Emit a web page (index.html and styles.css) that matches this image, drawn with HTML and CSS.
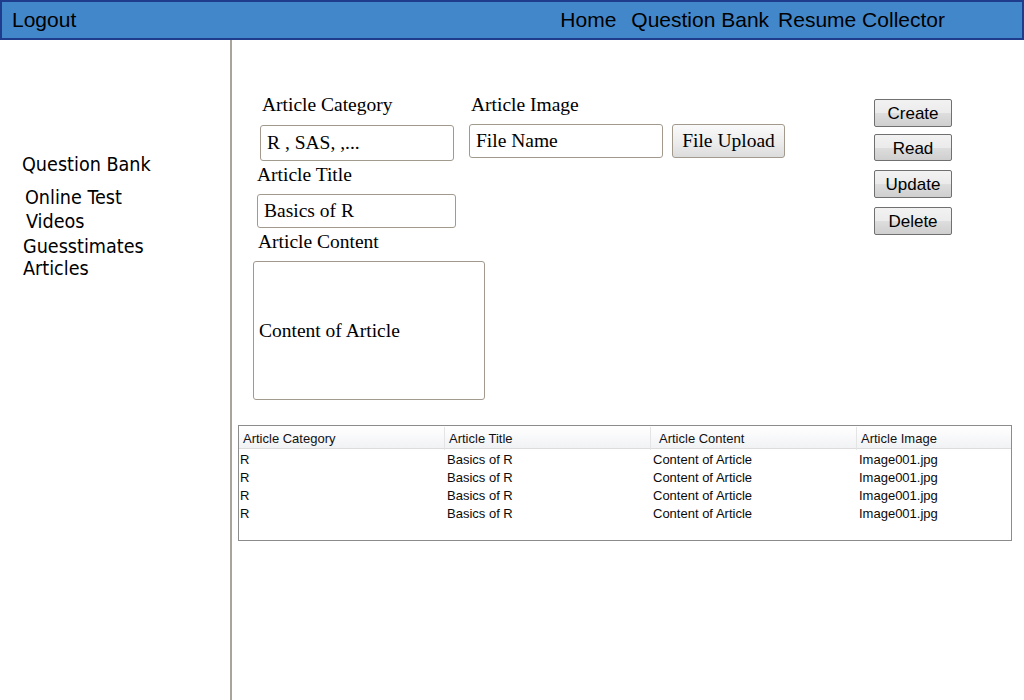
FILE: index.html
```html
<!DOCTYPE html>
<html>
<head>
<meta charset="utf-8">
<link rel="stylesheet" href="styles.css">
</head>
<body>
<header class="topbar">
  <span class="logout">Logout</span>
  <nav class="topnav">
    <span class="topnav-home">Home</span>
    <span class="topnav-qb">Question Bank</span>
    <span class="topnav-rc">Resume Collector</span>
  </nav>
</header>
<div class="layout">
  <aside class="sidebar">
    <div class="side-item side-qb">Question Bank</div>
    <div class="side-item side-ot">Online Test</div>
    <div class="side-item side-vid">Videos</div>
    <div class="side-item side-gue">Guesstimates</div>
    <div class="side-item side-art">Articles</div>
  </aside>
  <main class="main">
    <section class="form">
      <div class="col-a">
        <label class="lbl lbl-cat">Article Category</label>
        <div class="field field-cat">R , SAS, ,...</div>
        <label class="lbl lbl-title">Article Title</label>
        <div class="field field-title">Basics of R</div>
        <label class="lbl lbl-content">Article Content</label>
        <div class="field field-content">Content of Article</div>
      </div>
      <div class="col-b">
        <label class="lbl lbl-img">Article Image</label>
        <div class="img-row">
          <div class="field field-img">File Name</div>
          <button class="upload-btn">File Upload</button>
        </div>
      </div>
      <div class="col-c">
        <button class="crud-btn crud-create">Create</button>
        <button class="crud-btn crud-read">Read</button>
        <button class="crud-btn crud-update">Update</button>
        <button class="crud-btn crud-delete">Delete</button>
      </div>
    </section>
    <section class="grid">
      <div class="grid-head">
        <div class="gh gh-1">Article Category</div>
        <div class="gh gh-2">Article Title</div>
        <div class="gh gh-3">Article Content</div>
        <div class="gh gh-4">Article Image</div>
      </div>
      <div class="grid-body">
        <div class="grow"><span class="c1">R</span><span class="c2">Basics of R</span><span class="c3">Content of Article</span><span class="c4">Image001.jpg</span></div>
        <div class="grow"><span class="c1">R</span><span class="c2">Basics of R</span><span class="c3">Content of Article</span><span class="c4">Image001.jpg</span></div>
        <div class="grow"><span class="c1">R</span><span class="c2">Basics of R</span><span class="c3">Content of Article</span><span class="c4">Image001.jpg</span></div>
        <div class="grow"><span class="c1">R</span><span class="c2">Basics of R</span><span class="c3">Content of Article</span><span class="c4">Image001.jpg</span></div>
      </div>
    </section>
  </main>
</div>
</body>
</html>
```
FILE: styles.css
```css
* { box-sizing: border-box; }
html, body { margin: 0; padding: 0; background: #fff; }
body { width: 1024px; height: 700px; overflow: hidden; font-family: "Liberation Sans", Arial, sans-serif; color: #000; }

.topbar {
  height: 40px;
  background: #4387cb;
  border: 2px solid #1f3c8c;
  display: flex;
  align-items: center;
  font-size: 21px;
  padding: 0 77px 0 10px;
}
.topnav { margin-left: auto; display: flex; }
.topnav-home { margin-right: 15px; }
.topnav-qb { margin-right: 9px; }

.layout { display: flex; height: 660px; }
.sidebar {
  width: 232px;
  flex: none;
  border-right: 2px solid #a8a49c;
  padding-top: 113px;
  font-family: "DejaVu Sans Condensed", "DejaVu Sans", sans-serif;
  font-stretch: condensed;
  font-size: 19.6px;
  display: flex;
  flex-direction: column;
}
.side-item { line-height: 24px; }
.side-qb { margin-left: 22px; }
.side-ot { margin-left: 25px; margin-top: 9px; }
.side-vid { margin-left: 26px; }
.side-gue { margin-left: 23px; margin-top: 1px; }
.side-art { margin-left: 23px; margin-top: -2px; }

.main { flex: 1; padding: 54px 12px 0 6px; }
.form { display: flex; }
.lbl {
  display: block;
  font-family: "Liberation Serif", "Times New Roman", serif;
  font-size: 19.5px;
  line-height: 22px;
  height: 22px;
}
.field {
  font-family: "Liberation Serif", "Times New Roman", serif;
  font-size: 19.5px;
  color: #000;
  border: 1px solid #a39a8e;
  border-radius: 3px;
  background: #fff;
  display: flex;
  align-items: center;
  padding-left: 6px;
  white-space: nowrap;
}
.col-a { width: 216px; margin-left: 15px; flex: none; display: flex; flex-direction: column; }
.lbl-cat { margin-left: 9px; }
.field-cat { margin-left: 7px; margin-top: 9px; width: 194px; height: 36px; }
.lbl-title { margin-left: 4px; margin-top: 3px; }
.field-title { margin-left: 4px; margin-top: 8px; width: 199px; height: 34px; }
.lbl-content { margin-left: 5px; margin-top: 3px; }
.field-content { margin-top: 8px; width: 232px; height: 139px; padding-left: 5px; }

.col-b { width: 405px; flex: none; }
.lbl-img { margin-left: 2px; }
.img-row { display: flex; margin-top: 8px; }
.field-img { width: 194px; height: 34px; }
.upload-btn {
  margin-left: 9px;
  width: 113px;
  height: 34px;
  font-family: "Liberation Serif", "Times New Roman", serif;
  font-size: 19.5px;
  color: #000;
  border: 1px solid #a39a8e;
  border-radius: 3px;
  background: linear-gradient(#fafafa, #ececec 55%, #dcdcdc);
  padding: 0;
}

.col-c { display: flex; flex-direction: column; margin-top: 5px; }
.crud-btn {
  width: 78px;
  height: 28px;
  font-family: "Liberation Sans", Arial, sans-serif;
  font-size: 17px;
  color: #000;
  border: 1px solid #707070;
  border-radius: 2px;
  background: linear-gradient(#f2f2f2 0%, #ebebeb 50%, #dddddd 52%, #cfcfcf 100%);
  padding: 2px 0 0;
}
.crud-read { margin-top: 7px; height: 27px; }
.crud-update { margin-top: 9px; }
.crud-delete { margin-top: 9px; }

.grid {
  margin-top: 25px;
  width: 774px;
  height: 116px;
  border: 1px solid #8c8c8c;
  padding-top: 1px;
  font-family: "Liberation Sans", Arial, sans-serif;
  font-size: 13px;
}
.grid-head {
  display: grid;
  grid-template-columns: 206px 206px 206px 1fr;
  height: 22px;
  background: linear-gradient(#ffffff, #f1f2f4);
  border-bottom: 1px solid #dcdcdc;
  color: #111;
}
.gh { line-height: 23px; padding-left: 4px; border-right: 1px solid #e4e4e4; }
.gh-3 { padding-left: 8px; }
.gh-4 { border-right: none; }
.grid-body { padding-top: 2px; }
.grow {
  display: grid;
  grid-template-columns: 206px 206px 206px 1fr;
  height: 18px;
  line-height: 18px;
  color: #0a0a0a;
}
.grow span { padding-left: 2px; }
.grow .c1 { padding-left: 1px; }
```
